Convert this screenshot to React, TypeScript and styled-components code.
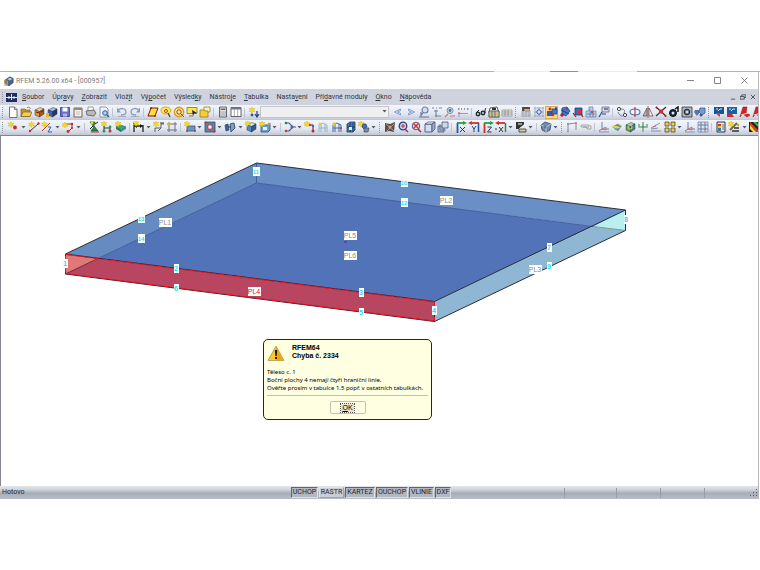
import React from "react";
import styled, { createGlobalStyle, css } from "styled-components";

const GlobalStyle = createGlobalStyle`
  *, *::before, *::after { box-sizing: border-box; }
  body { margin: 0; background: #fff; }
  button, select { font: inherit; color: inherit; }
`;

const ui = `Roboto, "Noto Sans", sans-serif`;
const sans = `"Liberation Sans", Arial, sans-serif`;
const small = `"Noto Sans", "Open Sans", sans-serif`;

/* ---------- icon drawings: [path, fill, stroke, stroke width] on a 12x12 grid ---------- */

type Shape = [string, string, string?, number?];

const line = (d: string, color: string, w = 1): Shape => [d, "none", color, w];
const dot = (x: number, y: number, color: string, r = 1.2): Shape => [
  `M${x - r} ${y}a${r} ${r} 0 1 0 ${2 * r} 0a${r} ${r} 0 1 0 ${-2 * r} 0z`,
  color,
];
const ring = (x: number, y: number, r: number, color: string, w = 1, fill = "none"): Shape => [
  `M${x - r} ${y}a${r} ${r} 0 1 0 ${2 * r} 0a${r} ${r} 0 1 0 ${-2 * r} 0z`,
  fill,
  color,
  w,
];
const star = (x: number, y: number): Shape => [
  `M${x} ${y - 3}l1 1.8 2-.4-1.3 1.6 1.3 1.6-2-.4-1 1.8-1-1.8-2 .4 1.3-1.6-1.3-1.6 2 .4z`,
  "#f4dc1c",
  "#cfae20",
  0.4,
];
const cube = (front: string, side: string, top: string): Shape[] => [
  ["M2 4l5-2.500 4 1.500-4.500 2.500z", top, "#333", 0.5],
  ["M2 4l4.500 1.500v5.500l-4.500-2z", front, "#333", 0.5],
  ["M6.500 5.500l4.500-2.500v5l-4.500 3z", side, "#333", 0.5],
];

const axisArrows = (a: string, b: string): Shape[] => [
  line("M2.500 12V2", a, 1.8),
  line("M2 2H9", b, 1.8),
  ["M8 0l4 2-4 2z", b],
];

const icons: Record<string, Shape[]> = {
  new: [["M2.500 1h5l2.500 2.500v8H2.500z", "#fff", "#555", 0.8], line("M7.500 1v2.500H10", "#555", 0.7)],
  open: [["M1 3h4l1 1h4v6.500H1z", "#c9962a", "#6c5313", 0.6], ["M3 6h9l-2 4.500H1z", "#f6ce55", "#6c5313", 0.6], line("M7 2c2-2 3 0 3.500 1", "#555", 0.8)],
  blockOrange: [...cube("#e8962e", "#a4591a", "#ffd084"), line("M3 6l3 1M8 6l2-1", "#4b250c", 1)],
  blockBlue: [...cube("#3964c6", "#173784", "#a9bff0"), ["M0 7h3v4H0z", "#e8b92a"]],
  save: [["M1.500 1.500h9v9h-9z", "#6a6ad2", "#3b3b8d", 0.8], ["M3.500 1.500h5v4h-5z", "#fff"], ["M4 7.500h4v3H4z", "#b3b3e4"]],
  clip: [["M2 2h8v9H2z", "#f4f0ea", "#70655b", 1], ["M2 2h8v2H2z", "#9b8878"], line("M4 6h4M4 8h4", "#aaa", 0.6)],
  print: [["M3 1h5l1 4H3z", "#fff", "#777", 0.7], ["M1 5l8-1 2 3-2 3-7-1z", "#b8bac3", "#555", 0.8], dot(9, 8, "#d7b034", 1)],
  preview: [["M2 1h6l2 2v8H2z", "#eef4fb", "#68788c", 0.7], ring(7, 7, 2.3, "#315a94", 1, "#a9d2f3"), line("M8.500 8.500L11 11", "#315a94", 1.3)],
  undo: [line("M2 4c4-3 8-1 8 2s-3 3-5 3", "#8b9cb8", 1.3), ["M1 1.500v5h4z", "#8b9cb8"], line("M2 10.500h8", "#9ba7bb", 0.8)],
  redo: [line("M10 4c-4-3-8-1-8 2s3 3 5 3", "#8b9cb8", 1.3), ["M11 1.500v5H7z", "#8b9cb8"], line("M2 10.500h8", "#9ba7bb", 0.8)],
  plate: [["M4 2h7L8 10H1z", "#ffdf35", "#7d1b12", 1], dot(4, 2, "#a81810", 1), dot(8, 10, "#a81810", 1)],
  find: [["M1 4c0-4 9-4 10 0 0 3-3 4-5 4-3 0-5-1-5-4z", "#ffe64a", "#c79c1c", 0.8], ring(6, 5, 1.5, "#a13b2b", 0.9), line("M8 7l2 4", "#593a24", 1.3)],
  target: [ring(6, 6, 4.6, "#d6a014", 1.6, "#fff3a0"), ring(6, 6, 2.2, "#b12a24", 1), line("M8 8l3 3", "#555", 1)],
  monitor: [["M1 1.500h10v6H1z", "#ffe648", "#87751a", 0.8], ["M6 4l5 3-3 .5-1 3z", "#222"], line("M3 10h4", "#777")],
  folder: [["M5 1h6v5H5z", "#fff6ae", "#827422", 0.7], ["M1 4h4l1 1h3v6H1z", "#f5cf33", "#826b15", 0.7]],
  calc: [["M2.500 1h7v10h-7z", "#e5e7ec", "#555", 0.9], ["M3.500 2.500h5V4h-5z", "#666"], line("M4 5v5M6 5v5M8 5v5", "#999", 0.9)],
  table: [["M1 1.500h10v9H1z", "#fff", "#555", 0.9], ["M1 1.500h10v2H1z", "#70788a"], line("M4.300 3v7M7.600 3v7", "#999", 0.8)],
  loadStar: [star(4, 4), dot(4, 9, "#30589c", 1.4), line("M9 5v6M7 8l2 3 2-3", "#293f78", 1.2)],
  prev: [["M2.500 6l6-3v1.700L5.500 6l3 1.300V9z", "#dce9fb", "#5d83c2", 0.7]],
  next: [["M9.500 6l-6-3v1.700L6.500 6l-3 1.300V9z", "#dce9fb", "#5d83c2", 0.7]],
  loadLens: [ring(7, 4, 3, "#6e829e", 1.2, "#d1e0ef"), line("M3 11V6M1 11h10M5 7L3 9", "#67799b", 1.2)],
  dims: [line("M1 2h2M5 2h1M8 2h3M5 4v7M3 5h4M4 10h6", "#7184a6", 1.2)],
  lensRed: [ring(6, 4.500, 3, "#7c90ad", 1, "#c8d7e5"), dot(6, 4.500, "#5b6c88", 1.4), line("M1 11l3-3M6 10h5", "#cf7468", 1.2)],
  dims2: [line("M1 3h1.500M4 3h1M7 3h1M10 3h1.500", "#7482a0", 1.3), line("M1 7.500h10M2 7v4", "#8293b4", 0.9), dot(2, 7, "#e26b62", 1)],
  glasses: [ring(3, 8, 1.8, "#222", 1.3, "#9ec5d6"), ring(8, 7, 1.8, "#222", 1.3, "#9ec5d6"), line("M2 6l2-2M10 7c0-3 0-4 1-5", "#222", 1)],
  sheet: [["M2 2l7-1 2 6H1z", "#fff", "#333", 0.8], ["M1 5h10v6H1z", "#fff4b2", "#333", 0.9], line("M2 7h8M2 9h8M4 5v6M7 5v6", "#444", 0.6), ["M4 2h4v2H4z", "#333"]],
  sheet2: [["M1 4h10v6H1z", "#fff3bb", "#838b9e", 0.7], line("M1 6h10M1 8h10M4 4v6M7 4v6", "#7587b0", 0.8)],
  gridHand: [["M2 1h8v4H2z", "#4e4a49"], ["M4 3l6 0-1 3-4 0z", "#d3a58a"], line("M1 6h10M1 8h10M1 10h10M3 5v6M6 5v6M9 5v6", "#9a9ca5", 0.8)],
  gridStar: [line("M1 2h10M1 6h10M1 10h10M2 1v10M6 1v10M10 1v10", "#99a0b1", 0.8), ring(6, 6, 2.2, "#2d50a8", 1, "#dce5f9")],
  snap: [["M1 5h5v5H1z", "#345ba4"], ["M6 3h5v5H6z", "#3f79cb", "#1c3c79", 0.7], dot(4, 3, "#c62621", 1.4), dot(7, 9, "#d12a24", 1.2), dot(10, 2.500, "#2147a1", 1.2)],
  cubeSnapA: [["M3 2l5-1 3 4-4 5-4-2z", "#3c7dc5", "#264781", 0.8], dot(3, 9, "#bd1917", 1.7), dot(8, 3, "#c52926", 1.1), line("M2 4l8 4", "#173d8a")],
  cubeSnapB: [["M3 2h7v7H3z", "#356ab9", "#213c78", 0.8], ["M5 4h4v3H5z", "#d93630"], line("M1 7l3 4M9 8l2 3", "#a71c18", 1.2)],
  building: [["M4 1h4v4h3v6H1V5h3z", "#b8d2ea", "#6a7ea4", 0.7], line("M2 8h8M5 3v8M8 5v6", "#5577af", 0.8), dot(7, 6, "#c44d49", 1.2)],
  flag: [["M4 1h7v5H4z", "#d8dae6", "#5e6684", 0.8], line("M6 3h4", "#38426b", 1.2), line("M4 6L1 11M4 8h4", "#29437b", 1.1)],
  linkNodes: [ring(3, 3, 1.6, "#333", 0.9, "#fff"), ring(9, 9, 1.6, "#333", 0.9, "#fff"), line("M5 3c4 0 4 2 3 4M2 6c1 3 3 4 5 4", "#76808f", 1)],
  ellipse: [["M1 6c0-4 10-4 10 0s-10 4-10 0z", "#eef4ff", "#4b6fb7", 1.1], line("M6 1v10", "#b93331", 1.1)],
  mirror: [["M5 2v8H1z", "#b8bcc4", "#444", 0.7], ["M7 2v8h4z", "#fff", "#444", 0.7], line("M6 0v12", "#c23734", 0.9)],
  cross: [line("M1 1l10 9M11 1L1 10", "#333", 1.2), ["M4 3.500h4v4H4z", "#d42e29"], dot(1.500, 1.500, "#a32420", 1), dot(10.500, 10, "#a32420", 1)],
  bomb: [ring(5, 7, 3.5, "#111", 1, "#15213c"), dot(5, 7, "#dce7f7", 1.5), line("M7 3l3-2v5", "#111", 1.5)],
  camera: [["M1 1h10v10H1z", "#aeb3bd", "#333", 0.8], ring(6, 6, 2.8, "#222", 1, "#5f84ad"), dot(6, 6, "#fff", 1)],
  hearts: [["M1 4h4l1 2-3 4-3-4z", "#5874aa"], ["M6 2h5v5l-3 2-3-3z", "#7a99ce", "#334d80", 0.7], dot(7, 9, "#3f598b", 1.5)],
  pxA: [["M1 1h10v7H1z", "#16559c"], line("M3 3h2M7 3h2M5 5l2-2", "#fff", 0.9), ["M2 7h5v4z", "#d63a32"]],
  pxB: [["M1 1h10v7H1z", "#1c5ea8"], line("M3 3h2M7 3h2M5 5l2-2", "#fff", 0.9), ["M1 8h5l2 3H1z", "#cf2f29"]],
  pdf: [["M4 1l4 0-1 6 4 2-3 2-4-3-3 3z", "#d7231e", "#941b17", 0.6], line("M2 9l7-2", "#fff", 0.8)],
  rainbow: [["M0 1h12v10H0z", "#222"], ["M1 1l10 10H7L1 5z", "#e7352c"], ["M1 4l6 7H4L1 8z", "#f3df35"], ["M4 1h3l4 4v3z", "#43b045"]],
  node: [star(4, 3.500), dot(8, 6.500, "#c62a24", 1.9)],
  lineNew: [line("M2 10L10 3", "#333", 1), dot(2, 10, "#c9271f", 1.2), dot(10.500, 2.500, "#c9271f", 1.2), star(3.500, 3.500)],
  lineType: [line("M1 10L9 2", "#d13c2c", 1), star(3.500, 3.500), line("M7 6h3l-3 5h4", "#2d66b3", 1)],
  polyline: [line("M3 3h7v4L6 11", "#8a2e27", 1), dot(10, 3, "#d32922", 1.2), dot(6, 10.500, "#d32922", 1.4), star(3, 4), dot(10, 7, "#d32922", 1)],
  support: [["M2 1h5l-1 4 4 5H3l3-4z", "#268e43", "#164f2a", 0.7], line("M2 8l3-3M7 3l3-2", "#222", 1), dot(4, 2, "#e0d432", 1.5), line("M3 11h8", "#c52c26", 1)],
  hinge: [star(3, 3), line("M3 5v5M3 7h6v4", "#333", 1), dot(3, 10, "#319553", 1.5), dot(9, 10, "#bd3831", 1.5), dot(9, 6, "#319553", 1.4)],
  solidNew: [["M1 6l4-2 6 2-5 3z", "#42a869", "#1b643b", 0.7], ["M1 6l5 3v2L1 8z", "#267653"], ["M6 9l5-3v2l-5 3z", "#4389bb"], star(3, 3)],
  dimA: [line("M1 2v9M10 4v7M1 5h9", "#222", 1.3), ["M4 3v4L1 5zM7 3v4l3-2z", "#222"], star(3, 2.500)],
  dimB: [line("M2 11V7h6V3h3M5 10l3-3", "#555", 0.9), line("M7 2h4", "#333", 1), star(3, 3)],
  hatch: [line("M1 3h10M1 9h10M3 1v10M9 1v10", "#6c7180", 1), dot(3, 3, "#d7bd24", 1.6), ["M4 4h4v4H4z", "#e6e7ef"]],
  areaNew: [["M3 5h8v5H3z", "#6697c9", "#3d5373", 0.8], star(3, 3), dot(3, 10, "#bc3b35", 1), dot(11, 10, "#bc3b35", 1)],
  opening: [["M1 1h10v10H1z", "#667f9e", "#364966", 0.8], ["M4 4h4v4H4z", "#fff", "#bf322c", 0.8], dot(1.500, 1.500, "#c72e28", 1), dot(10.500, 10.500, "#c72e28", 1)],
  solids: [["M1 4l3-1 1 6-3 1z", "#3c669c", "#263b61", 0.7], ["M6 3l4-1 1 5-4 4z", "#78a2ce", "#263b61", 0.8], line("M4 6h3", "#333")],
  cubeBlue: [...cube("#5888bd", "#315a91", "#d2e3f4"), star(2.500, 2.500)],
  boxStar: [["M2 4h7l2-2v7l-2 2H2z", "#69a2d4", "#344f74", 0.8], ["M4 6h4v3H4z", "#e7f2fc"], star(3, 3), dot(10, 3, "#d29329", 1.3)],
  release: [line("M1 2h4l4 4-4 4H1M9 6h3", "#4f5872", 1.1), dot(2, 2, "#2e7d4c", 1.3), dot(2, 10, "#c73e37", 1.3), dot(8, 6, "#3d6ab1", 1.6)],
  loadArrow: [star(3, 3), line("M5 4h4v5", "#333", 1), dot(6, 4, "#cb3931", 1.2), dot(9, 5, "#3f68b5", 1.2), dot(9, 10, "#c72822", 1.5)],
  memberA: [line("M2 11V4l4-2 4 2v7M2 7h8M4 3v8M8 3v8", "#9db0d0", 1), dot(3, 3, "#e5cf4a", 1.5)],
  memberB: [line("M2 11V4l4-2 4 2v7M2 7h8M4 3v8M8 3v8", "#4669aa", 1), dot(3, 3, "#e8cc2a", 1.7), dot(10, 7, "#c63b33", 1)],
  mesh: [["M2 3l3-2h5v8l-2 2H2z", "#4a7bad", "#223957", 0.8], line("M2 6h8M5 2v9M8 2v9", "#173258", 0.8), ["M4 6h3v3H4z", "#e2eef5"]],
  stack: [star(3, 3), ["M5 3h3l1 3-3 2-2-2z", "#4b73b0", "#233d69", 0.7], ["M6 7h5l-1 4H6z", "#7b8cab", "#3d475e", 0.7]],
  render: [["M1 2l5 1 5-2-1 10-5-1-4 1z", "#5b5049"], line("M2 3l8 7M10 3L3 10", "#b09a82", 1), dot(6, 6, "#d1a079", 1.5)],
  zoomBlue: [ring(6, 5, 3.8, "#2d407b", 1.3, "#bed1f2"), line("M4 5h4M6 3v4", "#c83435", 1), line("M8 8l3 3", "#b12d2e", 1.5)],
  zoomRed: [ring(6, 5, 3.8, "#5b5670", 1, "#d9def1"), line("M3.500 2.500l5 5M8.500 2.500l-5 5", "#cc2c2d", 1.4), line("M8 8l3 3", "#9e2c2e", 1.5)],
  cubeWire: [["M1 3h7v8H1z", "#d4ddf0", "#46557d", 0.9], ["M1 3l3-2h7L8 3z", "#fff", "#46557d", 0.8], ["M8 3l3-2v7l-3 3z", "#9cabd0", "#46557d", 0.8]],
  cubes: [["M1 5h6v6H1z", "#a6b3d1", "#48577b", 0.8], ["M5 1h6v6H5z", "#ced9ec", "#48577b", 0.8], line("M3 3v6h6", "#59698d", 0.8)],
  axX: [...axisArrows("#2458a8", "#24a23f"), line("M5 6l5 5M10 6l-5 5", "#333c5c", 1)],
  axY: [line("M2 2h9", "#cf3431", 1.8), line("M10.500 2v9", "#2458a8", 1.6), ["M4 0v4L0 2z", "#cf3431"], line("M4 5l2 3 2-3M6 8v3", "#333c5c", 1)],
  axZ: [...axisArrows("#ca2e2a", "#24a23f"), line("M5.500 6h4l-4 5h4", "#333c5c", 1)],
  axNX: [line("M2 2h8", "#cf3431", 1.8), line("M10.500 2v9", "#2f8d3f", 1.5), ["M4 0v4L0 2z", "#cc2c28"], line("M0 8h2M4 6l4 5M8 6l-4 5", "#333", 1)],
  brush: [["M1 1h8v3L4 8H1z", "#333"], line("M3 3h4M4 8l6-5", "#fff", 1), ["M4 8h7v3H4z", "#d3ca8f", "#333", 0.8]],
  cubeGray: [["M1 4l4-3 6 2-1 6-4 2-4-2z", "#748aa5", "#3b4d67", 0.8], line("M1 4l5 2 5-3M6 6v5", "#cad9e6", 0.8), dot(5, 6, "#547aac", 1.4)],
  frame: [line("M2 11V3l8-1v7", "#8e919a", 1.1), dot(2, 3, "#b57e83", 1), dot(2, 10.500, "#8cad95", 1), dot(10, 2, "#b57e83", 1)],
  pill: [["M1 4h7l3 1v3H7L6 6H1z", "#e6e2df", "#9d9c9d", 0.8], line("M3 6h6", "#888", 0.8)],
  diagA: [line("M4 1v7l-3 2M4 8h7", "#667fac", 1), line("M4 8l4-2v3z", "#d16b6b", 0.9), line("M1 11h10", "#647ead", 0.7)],
  surfRainbow: [["M1 6l5-3 5 2-4 5z", "#60ac64"], ["M1 6l3-2 6 3-3 1z", "#d8d65b"], ["M3 5l4-2 2 1-3 1z", "#d96659"], ["M3 8l6-1-2 3z", "#5b8fd0"]],
  cubeGreen: [...cube("#4ead65", "#39889a", "#9bddba"), ring(6, 6, 2, "#d5bc57", 1.1)],
  cactus: [line("M6 1v10M2 3v3h8V3", "#71ac83", 1.5), dot(6, 6, "#5e9770", 1.3)],
  slopes: [line("M1 10h10M1 7l9-5M1 8l7-1", "#8491ab", 1), line("M3 6l3-1", "#c86a65", 1)],
  quads: [["M1 1h4v4H1zM7 1h4v4H7zM1 7h4v4H1zM7 7h4v4H7z", "#e7cf4c", "#51482e", 0.8]],
  gridBlue: [["M1 1h10v10H1z", "#dbe4f3", "#687da5", 0.7], line("M1 4h10M1 8h10M4 1v10M8 1v10", "#687da5", 1), dot(8, 8, "#c67373", 1)],
  legend: [["M2 1h8v10H2z", "#e6e8ed", "#333", 1], ["M3 3h3v2H3z", "#d33731"], ["M3 5h3v2H3z", "#e9cb36"], ["M3 7h3v3H3z", "#3976b7"], line("M7 4h2M7 6h2M7 8h2", "#444", 0.7)],
  pencils: [line("M2 9l7-7", "#6d6840", 2), star(3, 3), line("M4 10h7M6 7h5", "#333", 1.4), dot(10, 4, "#dc9e35", 1.3)],
};

/* ---------- toolbar contents: "|" separator, ":" grip, "v" drop-down arrow, "+" wider button ---------- */

const mainBarLeft =
  ": new open blockOrange blockBlue save clip print preview | undo redo | plate find target monitor folder | calc table | loadStar";
const mainBarRight =
  "prev next loadLens dims lensRed dims2 | glasses sheet sheet2 : gridHand gridStar snap cubeSnapA cubeSnapB building flag | linkNodes ellipse mirror cross bomb camera hearts : pxA pxB pdf pdf";
const modelBar =
  ": node+ v lineNew lineType+ v polyline+ v | support hinge+ solidNew | dimA v dimB hatch | areaNew v opening v solids+ v cubeBlue+ boxStar v | release v loadArrow memberA+ memberB+ mesh stack v : render zoomBlue zoomRed+ cubeWire cubes | axX axY+ axZ axNX v brush v | cubeGray v : frame+ pill | diagA surfRainbow cubeGreen cactus slopes+ quads v diagA gridBlue | legend pencils+ v rainbow";

/* ---------- styled parts ---------- */

const Page = styled.div`
  display: flex;
  flex-direction: column;
  height: 100vh;
  padding: 71px 0;
  background: #fff;
  overflow: hidden;
`;

const Desktop = styled.div`
  height: 1px;
  flex: none;
  background: linear-gradient(90deg, #b4b4b4 0 65%, #ececec 65% 72.4%, #5a9bd4 72.4% 76%, #ececec 76% 83.8%, #b0b0b0 83.8%);
`;

const Frame = styled.main`
  display: flex;
  flex: 1;
  min-height: 0;
  flex-direction: column;
  margin-right: 1px;
  border-right: 1px solid #b4b6ba;
`;

const TitleBar = styled.header`
  display: flex;
  align-items: center;
  height: 17px;
  padding-left: 4px;
  color: #7c7c7c;
  font: 7px/10px ${ui};
`;

const Title = styled.h1`
  flex: 1;
  margin: 0 0 0 2px;
  font: inherit;
`;

const CaptionButton = styled.button<{ $small?: boolean }>`
  display: grid;
  place-items: center;
  width: ${(p) => (p.$small ? 10 : 27)}px;
  height: 14px;
  padding: 0;
  border: 0;
  background: none;
`;

const MenuBar = styled.nav`
  display: flex;
  align-items: center;
  height: 16px;
  background: #cfd3de;
  color: #2f3442;
  font: 7px/12px ${ui};
`;

const MenuList = styled.div`
  display: flex;
  margin-left: 1px;
`;

const MenuItem = styled.button`
  padding: 0 4px;
  border: 0;
  background: none;
  white-space: nowrap;
`;

const MenuGap = styled.span`
  flex: 1;
`;

const Bar = styled.div`
  display: flex;
  align-items: center;
  height: 15px;
  overflow: hidden;
  background: linear-gradient(#f2f5fb, #e4e8f2 60%, #c8cddb);
  border-bottom: 1px solid #c3c8d5;
`;

const Tool = styled.button<{ $wide?: boolean; $on?: boolean }>`
  display: grid;
  place-items: center;
  flex: none;
  width: ${(p) => (p.$wide ? 14 : 13)}px;
  height: 13px;
  padding: 0;
  border: 0;
  background: none;
  ${(p) =>
    p.$on &&
    css`
      background: #ffd58a;
      box-shadow: inset 0 0 0 1px #dba94e;
    `}
`;

const Separator = styled.span`
  flex: none;
  width: 1px;
  height: 9px;
  margin: 0 2px;
  background: #c0c5d1;
`;

const Grip = styled.span`
  flex: none;
  width: 1px;
  height: 11px;
  margin: 0 3px 0 2px;
  border-left: 1px dotted #8e95a6;
`;

const More = styled.button`
  display: grid;
  place-items: center;
  flex: none;
  width: 7px;
  height: 13px;
  padding: 0;
  border: 0;
  background: none;
`;

const LoadCase = styled.span`
  display: flex;
  position: relative;
  flex: none;
  width: 129px;
  height: 12px;
  margin-right: 2px;
`;

const LoadCaseSelect = styled.select`
  width: 100%;
  padding: 0;
  border: 1px solid #c3c6cd;
  background: #f0f0f0;
  appearance: none;
`;

const LoadCaseArrow = styled.svg`
  position: absolute;
  right: 2px;
  top: 4px;
  pointer-events: none;
`;

const Viewport = styled.section`
  position: relative;
  flex: 1;
  min-height: 0;
  overflow: hidden;
  border-top: 1px solid #84878d;
  border-left: 1px solid #84878d;
  background: #fff;
`;

const Model = styled.svg`
  display: block;
  font: 7px ${sans};
`;

const Dialog = styled.div`
  position: absolute;
  left: 262px;
  top: 203px;
  width: 169px;
  padding: 4px 3px 5px;
  border: 1px solid #262622;
  border-radius: 5px;
  background: #ffffe1;
  color: #000;
  font: 7px/8px ${sans};
`;

const DialogHead = styled.div`
  display: flex;
  gap: 7px;
  height: 24px;
`;

const DialogTitle = styled.h2`
  margin: 0;
  font: bold 7px/8px ${sans};
`;

const DialogText = styled.p`
  margin: 0 0 3px;
  font: 6px/8px ${small};
  white-space: nowrap;
`;

const DialogFoot = styled.div`
  display: flex;
  justify-content: center;
  padding-top: 5px;
  border-top: 1px solid #bfbfc0;
`;

const OkButton = styled.button`
  display: grid;
  place-items: center;
  width: 36px;
  height: 13px;
  padding: 0;
  border: 1px solid #c2c2b6;
  border-radius: 2px;
  background: #ffffe6;
`;

const OkLabel = styled.span`
  padding: 0 1px;
  outline: 1px dotted #555;
  background: #e2e2cd;
`;

const StatusBar = styled.footer`
  display: flex;
  align-items: center;
  height: 13px;
  background: linear-gradient(#e2e4e8, #d3d7dd 25%, #a7acb7 55%, #b9bdc5);
  color: #24262a;
  font: 7px/9px ${ui};
`;

const StatusText = styled.span`
  width: 291px;
  padding-left: 2px;
`;

const Toggle = styled.button<{ $w: number; $raised?: boolean }>`
  width: ${(p) => p.$w}px;
  height: 11px;
  margin-right: 1px;
  padding: 0;
  border: 1px solid;
  border-color: ${(p) => (p.$raised ? "#dfe1e5 #a0a3aa #a0a3aa #dfe1e5" : "#62656c #dcdee2 #dcdee2 #62656c")};
  background: ${(p) => (p.$raised ? "#c9ccd3" : "#b3b7bf")};
  white-space: nowrap;
`;

const StatusCell = styled.span<{ $w: number }>`
  width: ${(p) => p.$w}px;
  height: 10px;
  border-left: 1px solid #989ca4;
`;

/* ---------- pieces ---------- */

const Icon = ({ name }: { name: string }) => (
  <svg width="12" height="12" viewBox="0 0 12 12" aria-hidden="true">
    {(icons[name] || []).map(([d, fill, stroke, w], i) => (
      <path key={i} d={d} fill={fill} stroke={stroke} strokeWidth={w} />
    ))}
  </svg>
);

const Tools = ({ spec }: { spec: string }) => (
  <>
    {spec.split(" ").map((token, i) => {
      if (token === "|") return <Separator key={i} />;
      if (token === ":") return <Grip key={i} />;
      if (token === "v")
        return (
          <More key={i} aria-label="Více">
            <svg width="5" height="3" viewBox="0 0 5 3">
              <path d="M.5 0h4L2.500 2.500z" fill="#555b69" />
            </svg>
          </More>
        );
      const name = token.replace("+", "");
      return (
        <Tool key={i} aria-label={name} $wide={token.endsWith("+")} $on={name === "snap"}>
          <Icon name={name} />
        </Tool>
      );
    })}
  </>
);

const menus = [
  ["", "S", "oubor"],
  ["Úpr", "a", "vy"],
  ["", "Z", "obrazit"],
  ["Vlož", "i", "t"],
  ["Vý", "p", "očet"],
  ["Výsled", "k", "y"],
  ["Nástro", "j", "e"],
  ["", "T", "abulka"],
  ["Nasta", "v", "ení"],
  ["Pří", "d", "avné moduly"],
  ["", "O", "kno"],
  ["", "N", "ápověda"],
];

type Tag = { x: number; y: number; text: string; color?: string };

const lineTags: Tag[] = [
  { x: 256, y: 171, text: "11" },
  { x: 141, y: 218, text: "13" },
  { x: 141, y: 238, text: "14" },
  { x: 65, y: 263, text: "1" },
  { x: 176, y: 268, text: "2" },
  { x: 176, y: 288, text: "6" },
  { x: 361, y: 292, text: "3" },
  { x: 361, y: 312, text: "5" },
  { x: 434, y: 310, text: "4" },
  { x: 404, y: 182, text: "10" },
  { x: 404, y: 202, text: "12" },
  { x: 626, y: 219, text: "8" },
  { x: 549, y: 247, text: "7" },
  { x: 549, y: 266, text: "9" },
];

const planeTags: Tag[] = [
  { x: 165, y: 222, text: "PL1" },
  { x: 446, y: 200, text: "PL2" },
  { x: 535, y: 269, text: "PL3" },
  { x: 254, y: 291, text: "PL4", color: "#f0101c" },
  { x: 350, y: 235, text: "PL5" },
  { x: 350, y: 255, text: "PL6" },
];

const SolidModel = () => (
  <Model width="758" height="350" viewBox="1 136 758 350" role="img" aria-label="Model">
    <path d="M65.500 254L256.500 163V183L65.500 274z" fill="#668bc0" />
    <path d="M256.500 163L625.500 210V230.500L256.500 183z" fill="#6a8fc6" />
    <path d="M98 258.500L256.500 183L593 226.500L434.500 301.500z" fill="#5273b7" />
    <path d="M65.500 254L98 258.500L65.500 274z" fill="#df7876" />
    <path d="M65.500 274L98 258.500L434.500 301.500V321.500z" fill="#b84660" />
    <path d="M434.500 301.500L593 226.500L625.500 230.500L434.500 321.500z" fill="#8fb7d3" />
    <path d="M593 226.500L625.500 210V230.500z" fill="#b9efee" />
    <path d="M98 258.500L256.500 183L593 226.500M256.500 183V163" fill="none" stroke="#435e9c" />
    <path d="M65.500 274L98 258.500" stroke="#6b2d3b" />
    <path d="M593 226.500L625.500 230.500" stroke="#7a9a96" />
    <path d="M65.500 254L256.500 163L625.500 210V230.500L434.500 321.500V301.500L625.500 210" fill="none" stroke="#2a2f38" />
    <path d="M65.500 254L434.500 301.500V321.500L65.500 274z" fill="none" stroke="#451a28" />
    <path d="M65.500 254.500L434.500 302V321L65.500 273.500z" fill="none" stroke="#ee1520" strokeDasharray="7 2" />
    <path d="M344 241h3v2h-3z" fill="#5a4aa4" />
    {lineTags.map((t) => {
      const w = t.text.length > 1 ? 7 : 5;
      return (
        <g key={t.text}>
          <rect x={t.x - (w - 1) / 2} y={t.y - 4} width={w} height="9" fill="#fff" />
          <text x={t.x} y={t.y + 3} textAnchor="middle" fontSize={t.text.length > 1 ? 6 : 7} fontWeight="bold" fill="#12dff0">
            {t.text}
          </text>
        </g>
      );
    })}
    {planeTags.map((t) => (
      <g key={t.text}>
        <rect x={t.x - 6} y={t.y - 4} width="13" height="9" fill="#fff" />
        <text x={t.x} y={t.y + 3} textAnchor="middle" fill={t.color || "#8b8b8b"}>
          {t.text}
        </text>
      </g>
    ))}
  </Model>
);

const Glyph = ({ d, size = 7, color = "#777" }: { d: string; size?: number; color?: string }) => (
  <svg width={size} height={size} viewBox="0 0 7 7" aria-hidden="true">
    <path d={d} fill="none" stroke={color} strokeWidth="0.9" />
  </svg>
);

const AppIcon = () => (
  <svg width="10" height="10" viewBox="0 0 12 12" aria-hidden="true">
    <path d="M1 5l6-4 4 2v5l-5 4-5-3z" fill="#49638c" stroke="#273b5d" strokeWidth="0.7" />
    <path d="M4 4l3-2 3 1.500-3 2z" fill="#b8cbe4" />
    <path d="M0 6h4M0 8.500h4M0 11h4M4 6v5" stroke="#d1a23a" strokeWidth="1.200" />
  </svg>
);

const DocIcon = () => (
  <svg width="11" height="9" viewBox="0 0 11 9" aria-hidden="true">
    <path d="M0 0h11v9H0z" fill="#1d2f60" />
    <path d="M0 4.500h11M5.500 1v6M3 3v3M8 3v3" stroke="#fff" strokeWidth="0.900" />
  </svg>
);

export default function App() {
  return (
    <Page>
      <GlobalStyle />
      <Desktop />
      <Frame>
        <TitleBar>
          <AppIcon />
          <Title>RFEM 5.26.00 x64 - [000957]</Title>
          <CaptionButton aria-label="Minimalizovat">
            <Glyph d="M0 3.500h7" />
          </CaptionButton>
          <CaptionButton aria-label="Maximalizovat">
            <Glyph d="M.5.5h6v6h-6z" />
          </CaptionButton>
          <CaptionButton aria-label="Zavřít">
            <Glyph d="M.5.5l6 6M6.500.5l-6 6" />
          </CaptionButton>
        </TitleBar>
        <MenuBar>
          <Grip />
          <DocIcon />
          <MenuList>
            {menus.map(([a, key, b]) => (
              <MenuItem key={a + key + b}>
                {a}
                <u>{key}</u>
                {b}
              </MenuItem>
            ))}
          </MenuList>
          <MenuGap />
          <CaptionButton $small aria-label="Minimalizovat dokument">
            <Glyph d="M1 6h5" size={6} color="#333" />
          </CaptionButton>
          <CaptionButton $small aria-label="Obnovit dokument">
            <Glyph d="M2 3V1h5v3H5M0 3h5v3H0z" size={6} color="#333" />
          </CaptionButton>
          <CaptionButton $small aria-label="Zavřít dokument">
            <Glyph d="M1 1l5 5M6 1L1 6" size={6} color="#333" />
          </CaptionButton>
        </MenuBar>
        <Bar role="toolbar" aria-label="Standardní">
          <Tools spec={mainBarLeft} />
          <LoadCase>
            <LoadCaseSelect aria-label="Zatěžovací stav" />
            <LoadCaseArrow width="5" height="3" viewBox="0 0 5 3">
              <path d="M.5 0h4L2.500 2.500z" fill="#555" />
            </LoadCaseArrow>
          </LoadCase>
          <Tools spec={mainBarRight} />
        </Bar>
        <Bar role="toolbar" aria-label="Model">
          <Tools spec={modelBar} />
        </Bar>
        <Viewport>
          <SolidModel />
          <Dialog role="alertdialog" aria-labelledby="dialog-title">
            <DialogHead>
              <svg width="18" height="18" viewBox="0 0 18 18" aria-hidden="true">
                <path d="M9 2L17 16.500H1z" fill="#f8cc25" stroke="#b9a56a" strokeLinejoin="round" />
                <path d="M9 2L17 16.500H9z" fill="#eaa819" />
                <path d="M7.800 6h2.400l-.5 6H8.300zM8 13h2v2H8z" fill="#1f1c14" />
              </svg>
              <DialogTitle id="dialog-title">
                RFEM64
                <br />
                Chyba č. 2334
              </DialogTitle>
            </DialogHead>
            <DialogText>
              Těleso c. 1<br />
              Boční plochy 4 nemají čtyři hraniční linie.
              <br />
              Ověřte prosím v tabulce 1.5 popř. v ostatních tabulkách.
            </DialogText>
            <DialogFoot>
              <OkButton>
                <OkLabel>
                  <u>O</u>K
                </OkLabel>
              </OkButton>
            </DialogFoot>
          </Dialog>
        </Viewport>
        <StatusBar>
          <StatusText>Hotovo</StatusText>
          <Toggle $w={27}>UCHOP</Toggle>
          <Toggle $w={25} $raised>RASTR</Toggle>
          <Toggle $w={30}>KARTEZ</Toggle>
          <Toggle $w={32}>OUCHOP</Toggle>
          <Toggle $w={25}>VLINIE</Toggle>
          <Toggle $w={16}>DXF</Toggle>
          <MenuGap />
          <StatusCell $w={52} />
          <StatusCell $w={44} />
          <StatusCell $w={44} />
          <StatusCell $w={46} />
          <svg width="8" height="8" viewBox="0 0 8 8" aria-hidden="true">
            <path d="M6 0h1v1H6zM3 3h1v1H3zM6 3h1v1H6zM0 6h1v1H0zM3 6h1v1H3zM6 6h1v1H6z" fill="#555b68" />
          </svg>
        </StatusBar>
      </Frame>
    </Page>
  );
}
